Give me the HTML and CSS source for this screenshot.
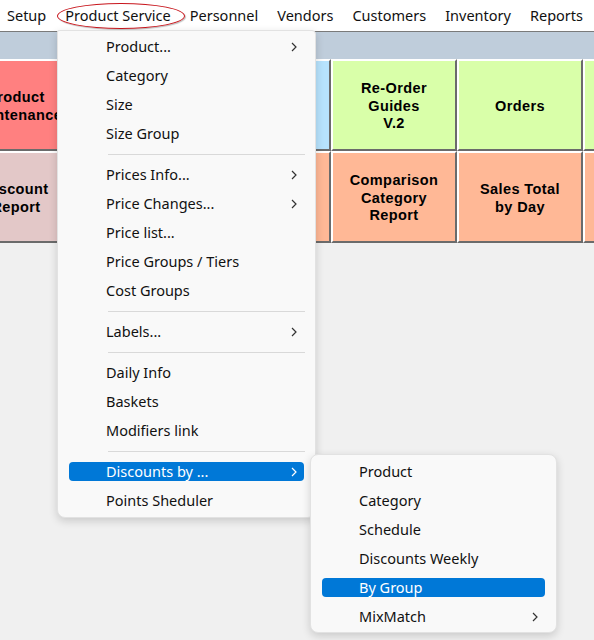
FILE: index.html
```html
<!DOCTYPE html>
<html lang="en">
<head>
  <meta charset="UTF-8" />
  <title>Back Office</title>
  <link rel="stylesheet" href="styles.css">
</head>
<body>
  <div class="menubar">
    <span class="menubar-item">Setup</span>
    <span class="menubar-item circled">Product Service</span>
    <span class="menubar-item">Personnel</span>
    <span class="menubar-item">Vendors</span>
    <span class="menubar-item">Customers</span>
    <span class="menubar-item">Inventory</span>
    <span class="menubar-item">Reports</span>
  </div>

  <div class="band"></div>

  <div class="tiles">
    <div class="tile-row">
      <div class="tile red">Product<br>Maintenance</div>
      <div class="tile blue"></div>
      <div class="tile blue"></div>
      <div class="tile green">Re-Order<br>Guides<br>V.2</div>
      <div class="tile green">Orders</div>
      <div class="tile green"></div>
    </div>
    <div class="tile-row">
      <div class="tile rose">Discount<br>Report</div>
      <div class="tile salmon"></div>
      <div class="tile salmon"></div>
      <div class="tile salmon">Comparison<br>Category<br>Report</div>
      <div class="tile salmon">Sales Total<br>by Day</div>
      <div class="tile salmon"></div>
    </div>
  </div>

  <!-- Product Service dropdown -->
  <div class="menu main-menu">
    <div class="item"><span>Product...</span><svg class="chev" width="6" height="10" viewBox="0 0 6 10"><polyline points="1,1 5,5 1,9"/></svg></div>
    <div class="item"><span>Category</span></div>
    <div class="item"><span>Size</span></div>
    <div class="item"><span>Size Group</span></div>
    <div class="sep"></div>
    <div class="item"><span>Prices Info...</span><svg class="chev" width="6" height="10" viewBox="0 0 6 10"><polyline points="1,1 5,5 1,9"/></svg></div>
    <div class="item"><span>Price Changes...</span><svg class="chev" width="6" height="10" viewBox="0 0 6 10"><polyline points="1,1 5,5 1,9"/></svg></div>
    <div class="item"><span>Price list...</span></div>
    <div class="item"><span>Price Groups / Tiers</span></div>
    <div class="item"><span>Cost Groups</span></div>
    <div class="sep"></div>
    <div class="item"><span>Labels...</span><svg class="chev" width="6" height="10" viewBox="0 0 6 10"><polyline points="1,1 5,5 1,9"/></svg></div>
    <div class="sep"></div>
    <div class="item"><span>Daily Info</span></div>
    <div class="item"><span>Baskets</span></div>
    <div class="item"><span>Modifiers link</span></div>
    <div class="sep"></div>
    <div class="item active"><span>Discounts by ...</span><svg class="chev" width="6" height="10" viewBox="0 0 6 10"><polyline points="1,1 5,5 1,9"/></svg></div>
    <div class="item"><span>Points Sheduler</span></div>
  </div>

  <!-- Discounts by ... submenu -->
  <div class="menu sub-menu">
    <div class="item"><span>Product</span></div>
    <div class="item"><span>Category</span></div>
    <div class="item"><span>Schedule</span></div>
    <div class="item"><span>Discounts Weekly</span></div>
    <div class="item active"><span>By Group</span></div>
    <div class="item"><span>MixMatch</span><svg class="chev" width="6" height="10" viewBox="0 0 6 10"><polyline points="1,1 5,5 1,9"/></svg></div>
  </div>
</body>
</html>
```

FILE: styles.css
```css
* { margin: 0; padding: 0; box-sizing: border-box; }

html, body {
  overflow: hidden;
}

body {
  position: relative;
  height: 640px;
  background: #f0f0f0;
  font-family: 'Noto Sans', 'Open Sans', sans-serif;
  font-size: 14.5px;
  color: #111;
}

/* top menu bar */
.menubar {
  display: flex;
  gap: 19px;
  height: 31px;
  padding-left: 7px;
  background: #fff;
  line-height: 31px;
  white-space: nowrap;
}

.menubar-item {
  position: relative;
}

.circled::after {
  content: '';
  position: absolute;
  top: 3px;
  bottom: 2px;
  left: -8px;
  right: -14px;
  border: 1.5px solid #c8161d;
  border-radius: 50%;
  box-shadow: 1px 1px 1px rgba(0, 0, 0, 0.25);
}

.band {
  height: 28px;
  border-top: 1px solid #7a7a7a;
  background: #bfcddb;
}

/* big coloured buttons */
.tile-row {
  display: flex;
  margin-left: -47px;
}

.tile {
  flex: none;
  display: flex;
  justify-content: center;
  align-items: center;
  width: 126px;
  height: 92px;
  padding-top: 3px;
  border: 2px solid;
  border-color: #fff #6b6b6b #6b6b6b #fff;
  font-family: 'Liberation Sans', Arial, sans-serif;
  font-size: 14.5px;
  font-weight: bold;
  letter-spacing: 0.4px;
  line-height: 17.5px;
  text-align: center;
  color: #000;
}

.red { background: #ff8080; }
.rose { background: #e3c8c8; }
.blue { background: #b7e3fd; }
.green { background: #d9ffa9; }
.salmon { background: #ffb896; }

/* dropdown menus */
.menu {
  position: absolute;
  display: flex;
  flex-direction: column;
  background: #f9f9f9;
  border: 1px solid #e2e2e2;
  border-radius: 8px;
  box-shadow: 0 3px 9px rgba(0, 0, 0, 0.16);
  white-space: nowrap;
}

.main-menu {
  top: 30px;
  left: 57px;
  width: 259px;
  padding: 1px 0 2px;
  border-top-left-radius: 2px;
  border-top-right-radius: 4px;
}

.sub-menu {
  top: 454px;
  left: 310px;
  width: 247px;
  padding: 2px 0 1px;
}

.item {
  display: flex;
  justify-content: space-between;
  align-items: center;
  height: 19px;
  margin: 5px 11px;
  padding: 0 7px 0 37px;
  border-radius: 4px;
  line-height: 19px;
}

.item.active {
  background: #0078d7;
  color: #fff;
}

.chev {
  fill: none;
  stroke: #333;
  stroke-width: 1.2;
}

.item.active .chev {
  stroke: #fff;
}

.sep {
  height: 1px;
  margin: 6px 10px 5px 50px;
  background: #d9d9d9;
}
```
